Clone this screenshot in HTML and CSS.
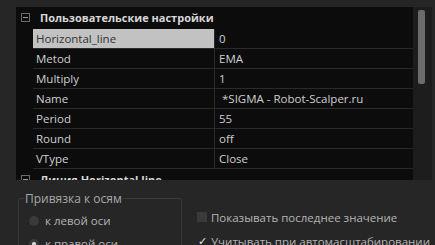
FILE: index.html
```html
<!DOCTYPE html>
<html lang="ru">
<head>
    <meta charset="UTF-8">
    <title>Настройки индикатора</title>
    <link rel="stylesheet" href="styles.css">
</head>
<body>
    <div class="panel">
        <div class="props">
            <div class="group-head">
                <span class="toggle"></span>
                <span>Пользовательские настройки</span>
            </div>
            <div class="row selected">
                <div class="name">Horizontal_line</div>
                <div class="value">0</div>
            </div>
            <div class="row">
                <div class="name">Metod</div>
                <div class="value">EMA</div>
            </div>
            <div class="row">
                <div class="name">Multiply</div>
                <div class="value">1</div>
            </div>
            <div class="row">
                <div class="name">Name</div>
                <div class="value">&nbsp;*SIGMA - Robot-Scalper.ru</div>
            </div>
            <div class="row">
                <div class="name">Period</div>
                <div class="value">55</div>
            </div>
            <div class="row">
                <div class="name">Round</div>
                <div class="value">off</div>
            </div>
            <div class="row">
                <div class="name">VType</div>
                <div class="value">Close</div>
            </div>
            <div class="group-head">
                <span class="toggle"></span>
                <span>Линия Horizontal line</span>
            </div>
        </div>
        <div class="scrollbar">
            <div class="thumb"></div>
        </div>
    </div>

    <div class="options">
        <fieldset class="axis">
            <legend>Привязка к осям</legend>
            <label class="radio"><span class="dot"></span>к левой оси</label>
            <label class="radio"><span class="dot checked"></span>к правой оси</label>
        </fieldset>
        <div class="checks">
            <label class="check"><span class="box"></span>Показывать последнее значение</label>
            <label class="check"><span class="box checked">&#10003;</span>Учитывать при автомасштабировании</label>
        </div>
    </div>
</body>
</html>
```

FILE: styles.css
```css
body {
    margin: 0;
    background-color: #262626;
    font-family: "Open Sans", "Noto Sans", sans-serif;
    font-size: 11.5px;
    color: #cfcfcf;
    overflow: hidden;
}

.panel {
    display: flex;
    margin: 7px 3px 0 16px;
    height: 173px;
    background-color: #0c0c0c;
    overflow: hidden;
}

.props {
    width: 397px;
}

.group-head {
    display: flex;
    align-items: center;
    height: 22px;
    font-weight: bold;
    font-size: 11px;
    color: #d8d8d8;
    box-sizing: border-box;
    padding-bottom: 1px;
}

.toggle {
    position: relative;
    width: 7px;
    height: 7px;
    margin: 0 10px 0 5px;
    border: 1px solid #6a6a6a;
}

.toggle::after {
    content: "";
    position: absolute;
    left: 1px;
    top: 3px;
    width: 5px;
    height: 1px;
    background-color: #9a9a9a;
}

.row {
    display: flex;
    height: 20px;
    margin-left: 17px;
    box-sizing: border-box;
    border-bottom: 1px solid #2a2a2a;
}

.row .name {
    width: 182px;
    padding-left: 3px;
    line-height: 19px;
    border-right: 1px solid #2a2a2a;
    box-sizing: border-box;
}

.row .value {
    padding-left: 4px;
    line-height: 19px;
}

.row.selected .name {
    background-color: #c2c2c2;
    color: #333;
}

.scrollbar {
    width: 19px;
    background-color: #1d1d1d;
    padding: 3px 0 0 5px;
    box-sizing: border-box;
}

.thumb {
    width: 7px;
    height: 74px;
    background-color: #6b6b6b;
    border-radius: 2px;
}

.options {
    display: flex;
    margin: 10px 0 0 18px;
}

.axis {
    width: 164px;
    margin: 0;
    padding: 2px 0 0 10px;
    border: 1px solid #3a3a3a;
    border-radius: 2px;
    height: 60px;
    box-sizing: border-box;
    color: #b5b5b5;
}

.axis legend {
    padding: 0 1px;
    margin-left: -5px;
    color: #a8a8a8;
    font-size: 12px;
}

.radio {
    display: flex;
    align-items: center;
    gap: 6px;
    height: 23px;
}

.dot {
    width: 10px;
    height: 10px;
    border-radius: 50%;
    background-color: #3a3a3a;
    display: flex;
    align-items: center;
    justify-content: center;
}

.dot.checked::after {
    content: "";
    width: 4px;
    height: 4px;
    border-radius: 50%;
    background-color: #e0e0e0;
}

.checks {
    margin: 15px 0 0 15px;
    color: #b5b5b5;
}

.check {
    display: flex;
    align-items: center;
    gap: 4px;
    height: 24px;
}

.box {
    width: 10px;
    height: 10px;
    background-color: #3a3a3a;
    font-size: 11px;
    line-height: 10px;
    color: #e8e8e8;
    text-align: center;
}

.box.checked {
    background-color: transparent;
}
```
